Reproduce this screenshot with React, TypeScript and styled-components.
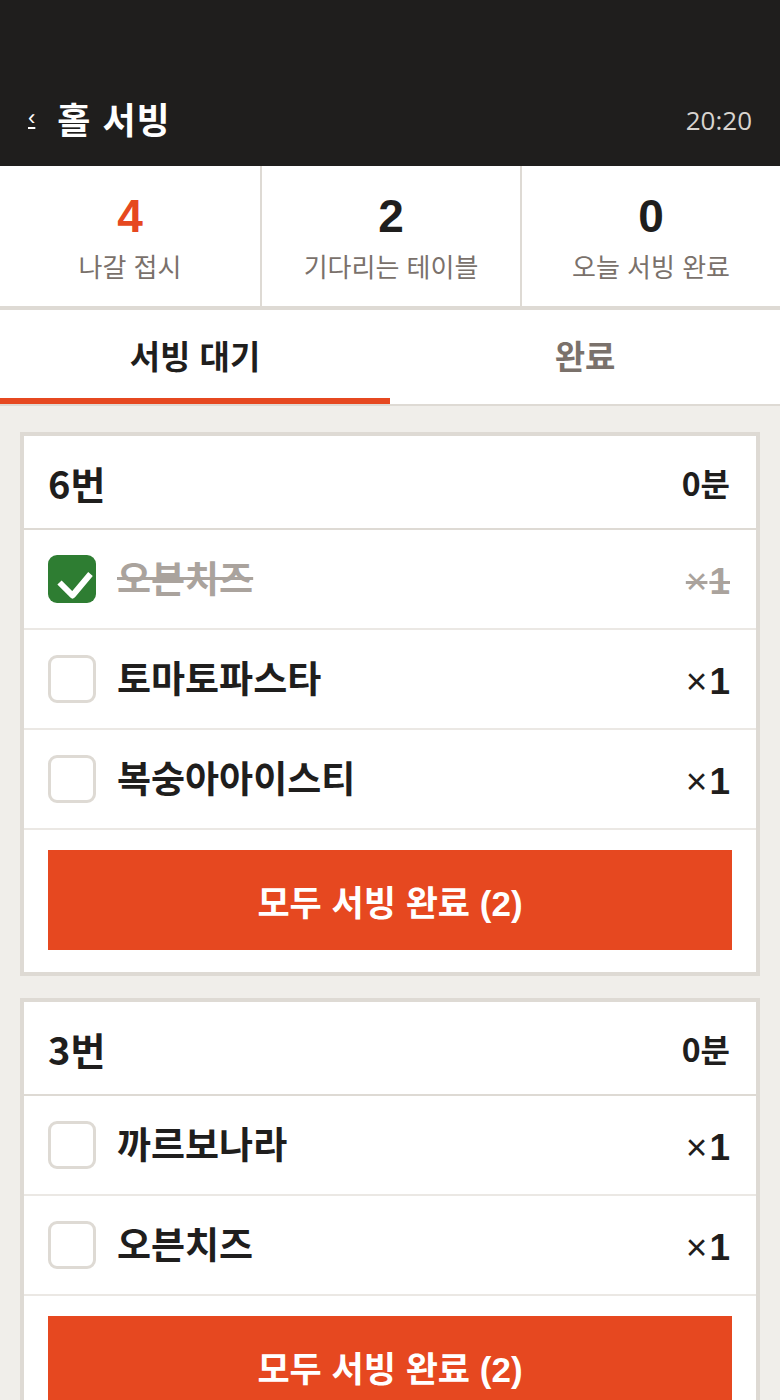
import React from "react";
import styled, { createGlobalStyle } from "styled-components";

const GlobalStyle = createGlobalStyle`
  html, body {
    margin: 0;
    padding: 0;
    background: #f0eeea;
  }
  * {
    box-sizing: border-box;
  }
`;

const SANS = `"Liberation Sans", "Noto Sans CJK KR", sans-serif`;
const CJK = `"Noto Sans CJK KR", "Noto Sans", sans-serif`;

const Page = styled.div`
  width: 780px;
  min-height: 1400px;
  background: #f0eeea;
  font-family: ${SANS};
`;

const Header = styled.header`
  height: 166px;
  background: #1f1e1d;
  display: flex;
  align-items: flex-end;
  justify-content: space-between;
  padding: 0 28px 22px 28px;
`;

const TitleWrap = styled.div`
  display: flex;
  align-items: center;
  gap: 22px;
`;

const BackLink = styled.a`
  color: #ffffff;
  font-size: 22px;
  text-decoration: underline;
  line-height: 1;
`;

const Title = styled.h1`
  margin: 0;
  color: #ffffff;
  font-size: 36px;
  font-weight: 700;
  letter-spacing: 1px;
`;

const Clock = styled.span`
  color: #d8d4cf;
  font-size: 26px;
  font-family: "Open Sans", sans-serif;
  margin-bottom: 6px;
`;

const Stats = styled.div`
  display: grid;
  grid-template-columns: repeat(3, 1fr);
  background: #ffffff;
  border-bottom: 4px solid #dedad4;
`;

const StatCell = styled.div`
  height: 140px;
  display: flex;
  flex-direction: column;
  align-items: center;
  justify-content: center;
  gap: 14px;
  padding-top: 6px;
  & + & {
    border-left: 2px solid #dedad4;
  }
`;

const StatNumber = styled.div<{ $accent?: boolean }>`
  font-family: "Liberation Sans Narrow", "Liberation Sans", sans-serif;
  font-size: 46px;
  font-weight: 700;
  line-height: 1;
  color: ${(p) => (p.$accent ? "#e64820" : "#1f1e1d")};
`;

const StatLabel = styled.div`
  font-size: 26px;
  color: #7a716b;
  line-height: 1.2;
`;

const Tabs = styled.div`
  display: grid;
  grid-template-columns: 1fr 1fr;
  background: #ffffff;
  border-bottom: 2px solid #dedad4;
`;

const Tab = styled.div<{ $active?: boolean }>`
  height: 94px;
  display: flex;
  align-items: center;
  justify-content: center;
  font-size: 33px;
  font-weight: 700;
  color: ${(p) => (p.$active ? "#1f1e1d" : "#7a716b")};
  border-bottom: 6px solid ${(p) => (p.$active ? "#e64820" : "transparent")};
  padding-top: 2px;
`;

const List = styled.div`
  display: flex;
  flex-direction: column;
  gap: 22px;
  padding: 26px 20px 0;
`;

const Card = styled.section`
  background: #ffffff;
  border: 4px solid #dedad4;
`;

const CardHead = styled.div`
  height: 94px;
  display: flex;
  align-items: center;
  justify-content: space-between;
  padding: 0 26px 0 24px;
  border-bottom: 2px solid #dedad4;
  font-family: ${CJK};
  font-weight: 700;
  color: #1f1e1d;
`;

const TableName = styled.div`
  font-size: 38px;
`;

const Elapsed = styled.div`
  font-size: 32px;
`;

const Item = styled.div<{ $done?: boolean }>`
  height: 100px;
  display: flex;
  align-items: center;
  padding: 0 26px 0 24px;
  border-bottom: 2px solid #ebe8e4;
  gap: 21px;
  color: ${(p) => (p.$done ? "#aaa39d" : "#1f1e1d")};
  text-decoration: ${(p) => (p.$done ? "line-through" : "none")};
`;

const Check = styled.span<{ $done?: boolean }>`
  width: 48px;
  height: 48px;
  flex: none;
  border-radius: 9px;
  display: flex;
  background: ${(p) => (p.$done ? "#2e7d32" : "#ffffff")};
  border: ${(p) => (p.$done ? "none" : "3px solid #dedad4")};
`;

const ItemName = styled.span`
  flex: 1;
  font-family: ${CJK};
  font-size: 37px;
  font-weight: 700;
  padding-bottom: 4px;
`;

const Qty = styled.span`
  font-size: 37px;
  font-weight: 700;
  padding-top: 6px;
`;

const Times = styled.span`
  font-weight: 400;
  margin-right: 2px;
`;

const Footer = styled.div`
  padding: 20px 24px 22px;
`;

const DoneButton = styled.button`
  width: 100%;
  height: 100px;
  border: none;
  background: #e64820;
  color: #ffffff;
  font-family: ${SANS};
  font-size: 35px;
  font-weight: 700;
  cursor: pointer;
`;

type Order = { table: string; minutes: number; items: { name: string; qty: number; done?: boolean }[] };

const orders: Order[] = [
  {
    table: "6번",
    minutes: 0,
    items: [
      { name: "오븐치즈", qty: 1, done: true },
      { name: "토마토파스타", qty: 1 },
      { name: "복숭아아이스티", qty: 1 },
    ],
  },
  {
    table: "3번",
    minutes: 0,
    items: [
      { name: "까르보나라", qty: 1 },
      { name: "오븐치즈", qty: 1 },
    ],
  },
];

const CheckIcon = () => (
  <svg width="48" height="48" viewBox="0 0 48 48" fill="none">
    <path d="M11.5 27.5l13 13L42.5 19" stroke="#ffffff" strokeWidth="6" strokeLinejoin="round" />
  </svg>
);

const OrderCard = ({ order }: { order: Order }) => {
  const pending = order.items.filter((i) => !i.done).length;
  return (
    <Card>
      <CardHead>
        <TableName>{order.table}</TableName>
        <Elapsed>{order.minutes}분</Elapsed>
      </CardHead>
      {order.items.map((item) => (
        <Item key={item.name} $done={item.done}>
          <Check $done={item.done}>{item.done && <CheckIcon />}</Check>
          <ItemName>{item.name}</ItemName>
          <Qty>
            <Times>×</Times>
            {item.qty}
          </Qty>
        </Item>
      ))}
      <Footer>
        <DoneButton>모두 서빙 완료 ({pending})</DoneButton>
      </Footer>
    </Card>
  );
};

const App = () => (
  <Page>
    <GlobalStyle />
    <Header>
      <TitleWrap>
        <BackLink href="#">‹</BackLink>
        <Title>홀 서빙</Title>
      </TitleWrap>
      <Clock>20:20</Clock>
    </Header>
    <Stats>
      <StatCell>
        <StatNumber $accent>4</StatNumber>
        <StatLabel>나갈 접시</StatLabel>
      </StatCell>
      <StatCell>
        <StatNumber>2</StatNumber>
        <StatLabel>기다리는 테이블</StatLabel>
      </StatCell>
      <StatCell>
        <StatNumber>0</StatNumber>
        <StatLabel>오늘 서빙 완료</StatLabel>
      </StatCell>
    </Stats>
    <Tabs>
      <Tab $active>서빙 대기</Tab>
      <Tab>완료</Tab>
    </Tabs>
    <List>
      {orders.map((o) => (
        <OrderCard key={o.table} order={o} />
      ))}
    </List>
  </Page>
);

export default App;
